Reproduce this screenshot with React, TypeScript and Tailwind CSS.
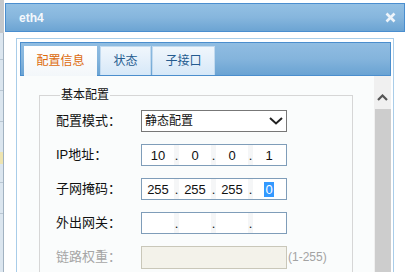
import React from 'react';

const cjk = "font-['Liberation_Sans','Noto_Sans_CJK_SC',sans-serif]";

const IpBox: React.FC<{ parts: string[]; selectLast?: boolean }> = ({ parts, selectLast }) => (
  <div className="flex h-[22px] w-[146px] border border-[#7f9db9] bg-white text-[13px] leading-[21px] text-[#111]">
    {parts.map((p, i) => (
      <React.Fragment key={i}>
        {i > 0 && <span className="w-[5px] bg-[#f5f6f7] text-center leading-[22px]">.</span>}
        <span className="w-[32px] text-center">
          {selectLast && i === parts.length - 1 ? (
            <span className="bg-[#3399ff] px-px text-white">{p}</span>
          ) : (
            p
          )}
        </span>
      </React.Fragment>
    ))}
  </div>
);

const Row: React.FC<{ label: string; disabled?: boolean; children: React.ReactNode }> = ({
  label,
  disabled,
  children,
}) => (
  <div className="flex h-[22px] items-center">
    <span className={`w-[85px] text-[13px] ${disabled ? 'text-[#a6a6a6]' : 'text-[#111]'}`}>{label}</span>
    {children}
  </div>
);

export default function App() {
  const tabs = ['状态', '子接口'];

  return (
    <div className={`flex h-[272px] w-[407px] overflow-hidden bg-white ${cjk}`}>
      {/* page behind the dialog */}
      <div className="flex w-[4px] shrink-0 flex-col">
        <div className="h-[33px] bg-[#c4c8cc]" />
        <div className="flex-1 border-r border-[#a2b2c1] bg-[#dce6ef]">
          <div className="mt-[26px] h-px bg-[#b9c6d2]" />
          <div className="mt-[30px] h-px bg-[#b9c6d2]" />
          <div className="mt-[30px] h-px bg-[#b9c6d2]" />
          <div className="mt-[30px] h-[12px] bg-[#eee4b0]" />
          <div className="mt-[18px] h-px bg-[#b9c6d2]" />
          <div className="mt-[30px] h-px bg-[#b9c6d2]" />
        </div>
      </div>

      {/* dialog */}
      <div className="flex flex-1 flex-col bg-white pl-px pr-[2px] pt-[3px]">
        <div className="flex h-[29px] shrink-0 items-center justify-between border border-[#4a8ecf] bg-gradient-to-b from-[#93c0e4] via-[#86b6dd] to-[#6ca4d3] pl-[13px] pr-[8px]">
          <span className="text-[12px] font-bold text-[#f4f8fc]">eth4</span>
          <svg width="11" height="11" viewBox="0 0 11 11">
            <path d="M1.5 1.5 L9.5 9.5 M9.5 1.5 L1.5 9.5" stroke="#eef4fa" strokeWidth="2.6" />
          </svg>
        </div>

        <div className="px-[11px] pt-[6px]">
          <div className="flex h-[260px] flex-col border border-[#a9cde9] bg-white pl-[3px] pr-[2px] pt-[3px]">
            {/* tab bar */}
            <div className="flex h-[34px] shrink-0 items-end border border-[#4b8ecd] bg-gradient-to-b from-[#90bde2] via-[#84b4dc] to-[#6aa3d3] pl-[3px]">
              <div className="relative -mb-px flex h-[30px] w-[73px] items-center justify-center bg-gradient-to-b from-white to-[#f3f7fa] text-[12px] text-[#dd6a0c]">
                配置信息
              </div>
              {tabs.map((t, i) => (
                <div
                  key={t}
                  className={`flex h-[29px] items-center justify-center border border-b-0 border-[#c2daef] bg-gradient-to-b from-[#f0f6fc] via-[#e4effa] to-[#d6e8f8] text-[12px] text-[#245b8f] ${
                    i === 0 ? 'ml-[3px] w-[51px]' : 'ml-px w-[63px]'
                  }`}
                >
                  {t}
                </div>
              ))}
            </div>

            {/* content + scrollbar */}
            <div className="flex min-h-0 flex-1">
              <div className="flex-1 bg-[#fafcfc] pt-[12px]">
                <fieldset className="ml-[19px] w-[314px] border border-[#d6d6d6] pb-[20px] pl-[16px] pt-[8px]">
                  <legend className="ml-[4px] px-px text-[12px] leading-[14px] text-[#111]">基本配置</legend>
                  <div className="flex flex-col gap-[12px]">
                    <Row label="配置模式：">
                      <div className="flex h-[22px] w-[146px] items-center justify-between border border-[#777] bg-white pl-[3px] pr-[3px] text-[12px] text-[#111]">
                        <span>静态配置</span>
                        <svg width="14" height="8" viewBox="0 0 14 8">
                          <path d="M1 1 L7 6.5 L13 1" fill="none" stroke="#222" strokeWidth="2" />
                        </svg>
                      </div>
                    </Row>
                    <Row label="IP地址：">
                      <IpBox parts={['10', '0', '0', '1']} />
                    </Row>
                    <Row label="子网掩码：">
                      <IpBox parts={['255', '255', '255', '0']} selectLast />
                    </Row>
                    <Row label="外出网关：">
                      <IpBox parts={['', '', '', '']} />
                    </Row>
                    <Row label="链路权重：" disabled>
                      <div className="h-[23px] w-[146px] border border-[#c9c7b9] bg-[#f3f2ea]" />
                      <span className="ml-px text-[12px] text-[#a3a3a3]">(1-255)</span>
                    </Row>
                  </div>
                </fieldset>
              </div>

              <div className="flex w-[17px] shrink-0 flex-col bg-[#f0f0f0]">
                <div className="flex h-[33px] items-center justify-center pt-[10px]">
                  <svg width="11" height="7" viewBox="0 0 11 7">
                    <path d="M1 6 L5.5 1.5 L10 6" fill="none" stroke="#555" strokeWidth="2.2" />
                  </svg>
                </div>
                <div className="ml-px flex-1 bg-[#cdcdcd]" />
              </div>
            </div>
          </div>
        </div>
      </div>
    </div>
  );
}
